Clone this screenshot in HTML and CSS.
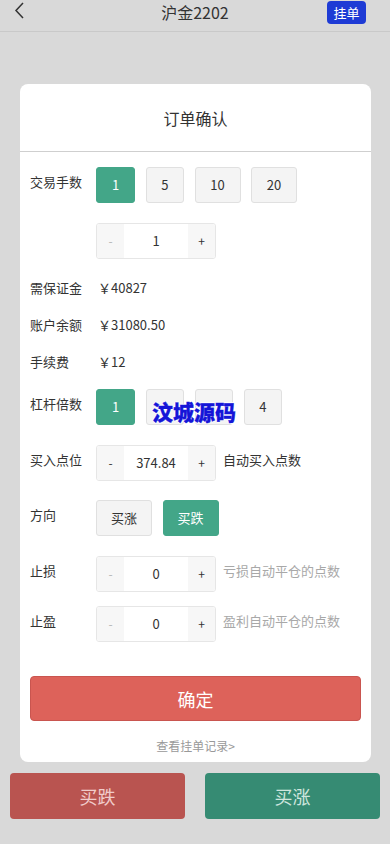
FILE: index.html
```html
<!DOCTYPE html>
<html lang="zh-CN">
<head>
<meta charset="utf-8">
<meta name="viewport" content="width=device-width, initial-scale=1">
<title>沪金2202</title>
<link rel="stylesheet" href="styles.css">
</head>
<body>
<header class="topbar">
  <div class="back">
    <svg width="12" height="18" viewBox="0 0 12 18"><polyline points="9,2 2,9.5 9,17" fill="none" stroke="#333" stroke-width="1.5"/></svg>
  </div>
  <div class="title">沪金2202</div>
  <div class="right"><span class="badge">挂单</span></div>
</header>

<section class="modal">
  <div class="modal-title">订单确认</div>
  <div class="modal-body">
    <div class="row r-first">
      <div class="label">交易手数</div>
      <div class="opts">
        <span class="opt w39 on">1</span>
        <span class="opt w38">5</span>
        <span class="opt w46">10</span>
        <span class="opt w46">20</span>
      </div>
    </div>
    <div class="row r-step">
      <div class="label"></div>
      <div class="stepper">
        <span class="sb dim">-</span><span class="sv">1</span><span class="sb">+</span>
      </div>
    </div>
    <div class="info i-first"><span class="label">需保证金</span><span class="val">￥40827</span></div>
    <div class="info"><span class="label">账户余额</span><span class="val">￥31080.50</span></div>
    <div class="info"><span class="label">手续费</span><span class="val">￥12</span></div>
    <div class="row r-lev">
      <div class="label">杠杆倍数</div>
      <div class="opts">
        <span class="opt w39 on">1</span>
        <span class="opt w38 covered">2</span>
        <span class="opt w38 covered">3</span>
        <span class="opt w38">4</span>
      </div>
      <span class="watermark">汶城源码</span>
    </div>
    <div class="row r-buy">
      <div class="label">买入点位</div>
      <div class="stepper">
        <span class="sb">-</span><span class="sv">374.84</span><span class="sb">+</span>
      </div>
      <div class="hint dark">自动买入点数</div>
    </div>
    <div class="row r-dir">
      <div class="label">方向</div>
      <div class="opts">
        <span class="opt w56">买涨</span>
        <span class="opt w56 on">买跌</span>
      </div>
    </div>
    <div class="row r-sl">
      <div class="label">止损</div>
      <div class="stepper">
        <span class="sb dim">-</span><span class="sv">0</span><span class="sb">+</span>
      </div>
      <div class="hint">亏损自动平仓的点数</div>
    </div>
    <div class="row r-tp">
      <div class="label">止盈</div>
      <div class="stepper">
        <span class="sb dim">-</span><span class="sv">0</span><span class="sb">+</span>
      </div>
      <div class="hint">盈利自动平仓的点数</div>
    </div>
    <button class="confirm">确定</button>
    <div class="records">查看挂单记录&gt;</div>
  </div>
</section>

<footer class="actions">
  <button class="act down">买跌</button>
  <button class="act up">买涨</button>
</footer>
</body>
</html>
```

FILE: styles.css
```css
* { box-sizing: border-box; }
html, body { margin: 0; padding: 0; }
body {
  width: 390px;
  height: 844px;
  background: #d9d9d9;
  font-family: "Noto Sans CJK SC", "Noto Sans", sans-serif;
  color: #333;
  overflow: hidden;
}
.topbar {
  height: 32px;
  border-bottom: 1px solid #c9c9c9;
  display: grid;
  grid-template-columns: 1fr auto 1fr;
  align-items: start;
}
.back { padding: 1px 0 0 14px; height: 20px; }
.back svg { display: block; }
.title { font-size: 16px; line-height: 22px; color: #333; padding-top: 1px; }
.right { display: flex; justify-content: flex-end; padding-right: 24px; }
.badge {
  margin-top: 1px;
  width: 39px; height: 23px;
  background: #1e3bd5;
  color: #fff;
  font-size: 13px;
  line-height: 23px;
  text-align: center;
  border-radius: 4px;
}
.modal {
  margin: 52px 19px 0 20px;
  background: #fff;
  border-radius: 8px;
  height: 678px;
}
.modal-title {
  height: 68px;
  border-bottom: 1px solid #cfcfcf;
  text-align: center;
  font-size: 16px;
  line-height: 68px;
  color: #333;
}
.modal-body { padding: 0 10px; }
.row { display: flex; align-items: flex-start; position: relative; }
.label {
  width: 66px;
  flex: none;
  font-size: 13px;
  line-height: 20px;
  padding-top: 5px;
  color: #333;
}
.opts { display: flex; gap: 10.5px; }
.opt {
  height: 36px;
  border: 1px solid #e0e0e0;
  background: #f4f4f4;
  border-radius: 3px;
  font-size: 13px;
  line-height: 34px;
  text-align: center;
  color: #333;
}
.opt.covered { color: transparent; }
.opt.on { background: #43a688; border-color: #43a688; color: #fff; }
.w38 { width: 38.5px; }
.w39 { width: 39px; }
.w46 { width: 46px; }
.w56 { width: 56px; }
.r-first { margin-top: 15px; }
.r-step { margin-top: 20px; }
.stepper {
  display: flex;
  height: 36px;
  border: 1px solid #e6e6e6;
  border-radius: 3px;
  overflow: hidden;
}
.sb {
  width: 27px;
  background: #f7f7f7;
  text-align: center;
  font-size: 12px;
  line-height: 34px;
  color: #333;
}
.sb.dim { color: #b5b5b5; }
.sv {
  width: 64px;
  background: #fff;
  text-align: center;
  font-size: 13px;
  line-height: 34px;
  color: #333;
}
.info { display: flex; align-items: center; height: 37px; }
.info .label { padding-top: 0; }
.i-first { margin-top: 10px; }
.val { font-size: 13px; color: #333; padding-left: 2px; }
.r-lev { margin-top: 9px; }
.r-buy { margin-top: 20px; }
.r-dir { margin-top: 19px; }
.r-sl { margin-top: 20px; }
.r-tp { margin-top: 14px; }
.hint {
  margin-left: 7px;
  font-size: 13px;
  line-height: 20px;
  padding-top: 5px;
  color: #a8a8a8;
}
.hint.dark { color: #333; }
.watermark {
  position: absolute;
  left: 122px;
  top: 10px;
  font-size: 21px;
  line-height: 24px;
  font-weight: 900;
  color: #1515d8;
  -webkit-text-stroke: 0.3px #1515d8;
  text-shadow: 1px 0 0 #fff, -1px 0 0 #fff, 0 1px 0 #fff, 0 -1px 0 #fff;
}
.confirm {
  display: block;
  width: 100%;
  margin-top: 34px;
  height: 45px;
  background: #dd625a;
  border: 1px solid #c9554f;
  border-radius: 4px;
  color: #fff;
  font-family: inherit;
  font-size: 18px;
  padding: 0;
}
.records {
  margin-top: 16px;
  text-align: center;
  font-size: 12px;
  line-height: 18px;
  color: #999;
}
.actions {
  display: flex;
  justify-content: space-between;
  padding: 0 10px;
  margin-top: 11px;
}
.act {
  width: 175px;
  height: 46px;
  border: none;
  border-radius: 4px;
  font-family: inherit;
  font-size: 18px;
  padding: 0;
}
.act.down { background: #b95450; color: #f1cccb; }
.act.up { background: #368b73; color: #cfe6de; }
```
